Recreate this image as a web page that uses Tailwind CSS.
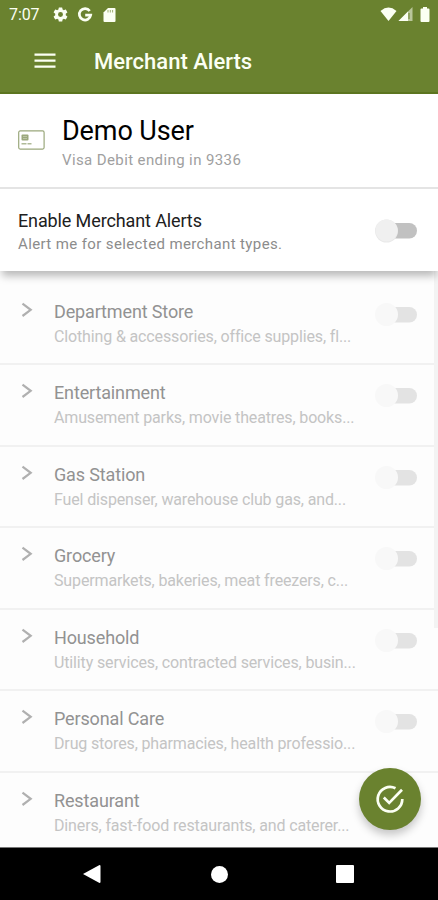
<!DOCTYPE html>
<html lang="en">
<head>
<meta charset="utf-8">
<title>Merchant Alerts</title>
<script src="https://cdn.jsdelivr.net/npm/@tailwindcss/browser@4"></script>
</head>
<body class="bg-white">
<div class="relative flex h-[900px] w-[438px] flex-col overflow-hidden bg-white font-['Roboto',sans-serif]">
  <header class="h-[94px] shrink-0 border-b-2 border-[#5c751f] bg-[#6a822f] text-[#fbfff3]">
    <div class="flex h-[29px] items-center pl-[9px] pr-[8px]">
      <span class="w-[43px] text-[16px] leading-[29px] tracking-[-0.1px]">7:07</span>
      <svg class="h-[17px] w-[17px]" viewBox="0 0 24 24" fill="currentColor"><path d="M19.4 13a7.5 7.5 0 0 0 0-2l2.2-1.7c.2-.1.3-.4.1-.6l-2-3.5c-.1-.2-.4-.3-.6-.2l-2.5 1a7.3 7.3 0 0 0-1.700-1l-.4-2.600a.5.5 0 0 0-.5-.4h-4a.5.5 0 0 0-.5.4l-.4 2.600a7.300 7.300 0 0 0-1.700 1L4.900 5c-.2-.1-.5 0-.6.2l-2 3.500c-.1.2-.1.5.1.600L4.600 11a7.500 7.500 0 0 0 0 2l-2.200 1.700c-.2.1-.3.4-.1.600l2 3.500c.1.2.4.3.6.2l2.500-1c.5.4 1.100.7 1.700 1l.4 2.600c0 .2.200.4.500.4h4c.3 0 .5-.2.500-.4l.4-2.600c.6-.3 1.200-.6 1.700-1l2.500 1c.2.100.5 0 .6-.2l2-3.500c.1-.2.1-.5-.1-.6zM12 15.500a3.500 3.500 0 1 1 0-7 3.500 3.500 0 0 1 0 7z"/></svg>
      <svg class="ml-[8px] h-[16px] w-[16px]" viewBox="0 0 16 16" fill="none" stroke="currentColor" stroke-width="2.700"><path d="M12.700 4A5.700 5.700 0 1 0 13.700 8.100H8.200"/></svg>
      <svg class="ml-[10px] h-[16px] w-[13px]" viewBox="0 0 13 16"><path fill="currentColor" d="M5 1h6.500Q12.500 1 12.500 2v12q0 1-1 1H1.500q-1 0-1-1V5.500z"/><path stroke="#9dae70" stroke-width="1" d="M5 3v2.500M7.300 3v2.500M9.600 3v2.500"/></svg>
      <svg class="ml-auto h-[15px] w-[17px]" viewBox="0 0 17 15" fill="currentColor"><path d="M.5 4Q8.500-2.800 16.500 4L8.500 14z"/></svg>
      <svg class="ml-[1px] h-[15px] w-[15px]" viewBox="0 0 15 15"><path fill="#b9c69a" d="M14.500 0v14H.5z"/><path fill="currentColor" d="M10 4.500V14H.5z"/><path stroke="#6a822f" stroke-width="1" d="M11 6v6"/></svg>
      <svg class="ml-[7px] h-[15px] w-[10px]" viewBox="0 0 10 15" fill="currentColor"><path d="M3 0h4v1.500h1.500q1 0 1 1V14q0 1-1 1h-7q-1 0-1-1V2.500q0-1 1-1H3z"/></svg>
    </div>
    <div class="flex h-[63px] items-center pl-[34px]">
      <svg class="h-[16px] w-[22px]" viewBox="0 0 22 16" stroke="currentColor" stroke-width="2.100"><path d="M.5 1.600h21M.5 7.600h21M.5 13.600h21"/></svg>
      <h1 class="ml-[38px] pt-[2px] text-[22px] font-medium leading-[28px]">Merchant Alerts</h1>
    </div>
  </header>

  <section class="flex h-[95px] shrink-0 border-b-2 border-[#e4e4e4] pl-[18px]">
    <svg class="mt-[36px] h-[20px] w-[27px]" viewBox="0 0 27 20" fill="none"><rect x=".7" y=".9" width="25.400" height="18.200" rx="1.500" stroke="#9ba87c" stroke-width="1.200"/><rect x="3.500" y="4.500" width="7" height="6" rx="1" fill="#9ba87c"/><path d="M5 6.500h4M5 8.500h4" stroke="#c3ccb0" stroke-width=".8"/><path d="M3.500 13.700h5M9.500 13.700h4" stroke="#afba97" stroke-width="1.600"/></svg>
    <div class="ml-[17px] pt-[20px]">
      <div class="text-[27px] leading-[34px] tracking-[-0.100px] text-black">Demo User</div>
      <div class="mt-[2px] text-[15px] leading-[20px] tracking-[0.390px] text-[#a0a0a0]">Visa Debit ending in 9336</div>
    </div>
  </section>

  <section class="relative z-10 flex h-[82px] shrink-0 bg-white pl-[18px] pr-[21px] shadow-[0_7px_8px_-2px_rgba(0,0,0,0.270)]">
    <div class="pt-[20px]">
      <div class="text-[18px] leading-[24px] tracking-[-0.120px] text-[#202020]">Enable Merchant Alerts</div>
      <div class="mt-[1px] text-[15px] leading-[20px] tracking-[0.380px] text-[#8c8c8c]">Alert me for selected merchant types.</div>
    </div>
    <svg class="ml-auto mt-[28px] h-[28px] w-[44px]" viewBox="0 0 44 28"><rect x="7" y="6" width="37" height="15.500" rx="7.700" fill="#c1c1c1"/><circle cx="13.500" cy="14" r="11.500" fill="#e9e9e9"/><circle cx="13.500" cy="13.500" r="11" fill="#f0f0f0"/></svg>
  </section>

  <main class="flex min-h-0 flex-1 overflow-hidden bg-[#fdfdfd] pt-[12.500px]">
    <ul id="merchant-types" class="w-full"></ul>
  </main>

  <div class="absolute right-0 top-[271px] h-[357px] w-[4px] bg-[#f3f3f3]"></div>

  <button class="absolute left-[359px] top-[768px] flex h-[62px] w-[62px] items-center justify-center rounded-full bg-[#6a822f] shadow-[0_5px_9px_rgba(0,0,0,0.220)]" aria-label="Save">
    <svg class="h-[30px] w-[30px]" viewBox="0 0 30 30" fill="none" stroke="#fbfff3" stroke-width="2.700"><path d="M20.500 4.200A12.300 12.300 0 1 0 27.300 15"/><path d="M8.800 13.500l5.400 5.400L27 5.800"/></svg>
  </button>

  <nav class="h-[53px] shrink-0 border-t border-[#777] bg-black">
    <div class="flex h-[52px] items-center pl-[83px] text-white">
      <svg class="h-[18px] w-[18px]" viewBox="0 0 18 18" fill="currentColor"><path d="M0 9L16.500 0q1 0 1 1v16q0 1-1 1z"/></svg>
      <div class="ml-[110px] h-[17px] w-[17px] rounded-full bg-white"></div>
      <div class="ml-[108px] h-[18px] w-[18px] rounded-[1px] bg-white"></div>
    </div>
  </nav>
</div>
<template id="merchant-row">
  <li class="flex h-[81.5px] border-b-2 border-[#f1f1f1] pl-[21px] pr-[21px]">
    <svg class="mt-[18px] h-[16px] w-[12px]" viewBox="0 0 12 16" fill="none" stroke="#b0b0b0" stroke-width="2.200"><path d="M1.500 1.600l8.200 6.200-8.200 6.200"/></svg>
    <div class="ml-[21px] pt-[16px]">
      <div data-title class="text-[18px] leading-[24px] tracking-[-0.140px] text-[#929292]"></div>
      <div data-detail class="mt-[3px] whitespace-nowrap text-[16px] leading-[20px] tracking-[-0.140px] text-[#c4c4c4]"></div>
    </div>
    <svg class="ml-auto mt-[17px] h-[28px] w-[44px] shrink-0" viewBox="0 0 44 28"><rect x="7" y="6" width="37" height="15.500" rx="7.700" fill="#e3e3e3"/><circle cx="13.500" cy="13.500" r="11.500" fill="#f8f8f8"/></svg>
  </li>
</template>
<script>
const types = [
  ["Department Store", "Clothing & accessories, office supplies, fl..."],
  ["Entertainment", "Amusement parks, movie theatres, books..."],
  ["Gas Station", "Fuel dispenser, warehouse club gas, and..."],
  ["Grocery", "Supermarkets, bakeries, meat freezers, c..."],
  ["Household", "Utility services, contracted services, busin..."],
  ["Personal Care", "Drug stores, pharmacies, health professio..."],
  ["Restaurant", "Diners, fast-food restaurants, and caterer..."]
];
const list = document.getElementById("merchant-types");
for (const [title, detail] of types) {
  const row = document.getElementById("merchant-row").content.cloneNode(true);
  row.querySelector("[data-title]").textContent = title;
  row.querySelector("[data-detail]").textContent = detail;
  list.append(row);
}
</script>
</body>
</html>
